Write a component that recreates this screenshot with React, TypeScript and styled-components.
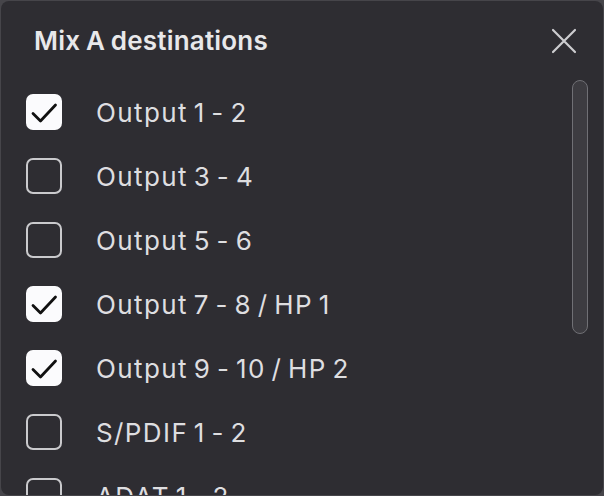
import React from "react";
import styled, { createGlobalStyle } from "styled-components";

const GlobalStyle = createGlobalStyle`
  html, body {
    margin: 0;
    padding: 0;
    background: #46454a;
  }
  body {
    font-family: Inter, "Noto Sans", sans-serif;
  }
`;

const Panel = styled.div`
  position: relative;
  box-sizing: border-box;
  margin: 1px 1px 0 1px;
  height: 494px;
  border-radius: 8px;
  background: #2e2d32;
  display: flex;
  flex-direction: column;
  overflow: hidden;
`;

const Header = styled.div`
  display: flex;
  align-items: center;
  justify-content: space-between;
  padding: 22px 26px 0 33px;
  height: 36px;
`;

const Title = styled.h1`
  margin: 0;
  font-size: 26px;
  line-height: 36px;
  font-weight: 600;
  color: #e8e8ea;
  letter-spacing: 0.2px;
  word-spacing: -1px;
`;

const CloseButton = styled.button`
  border: none;
  background: transparent;
  padding: 0;
  width: 26px;
  height: 26px;
  display: flex;
  align-items: center;
  justify-content: center;
  cursor: pointer;
`;

const List = styled.div`
  flex: 1;
  padding-top: 21px;
  overflow: hidden;
`;

const Row = styled.label`
  display: flex;
  align-items: center;
  height: 64px;
  padding-left: 25px;
  gap: 34px;
  cursor: pointer;
`;

const Box = styled.span<{ checked: boolean }>`
  box-sizing: border-box;
  width: 36px;
  height: 36px;
  border-radius: 7px;
  flex-shrink: 0;
  display: flex;
  align-items: center;
  justify-content: center;
  background: ${(p) => (p.checked ? "#fbfbfd" : "transparent")};
  border: ${(p) => (p.checked ? "none" : "2.5px solid #cacacd")};
`;

const Label = styled.span`
  font-size: 26px;
  color: #dedee0;
  letter-spacing: 1.4px;
  word-spacing: -3px;
`;

const Scrollbar = styled.div`
  position: absolute;
  top: 79px;
  right: 15px;
  width: 16px;
  height: 254px;
  box-sizing: border-box;
  border-radius: 8px;
  border: 1.5px solid #707075;
  background: #3d3c41;
`;

const items = [
  { name: "Output 1 - 2", checked: true },
  { name: "Output 3 - 4", checked: false },
  { name: "Output 5 - 6", checked: false },
  { name: "Output 7 - 8 / HP 1", checked: true },
  { name: "Output 9 - 10 / HP 2", checked: true },
  { name: "S/PDIF 1 - 2", checked: false },
  { name: "ADAT 1 - 2", checked: false },
];

const Check = () => (
  <svg width="36" height="36" viewBox="0 0 36 36" fill="none">
    <path
      d="M7 19.5l7.5 7.5L29.5 11"
      stroke="#111"
      strokeWidth="2.8"
      strokeLinecap="round"
      strokeLinejoin="round"
    />
  </svg>
);

export default function App() {
  return (
    <>
      <GlobalStyle />
      <Panel>
        <Header>
          <Title>Mix A destinations</Title>
          <CloseButton aria-label="Close">
            <svg width="26" height="26" viewBox="0 0 26 26" fill="none">
              <path
                d="M2 2l22 22M24 2L2 24"
                stroke="#cdcdd0"
                strokeWidth="2.2"
                strokeLinecap="round"
              />
            </svg>
          </CloseButton>
        </Header>
        <List>
          {items.map((it) => (
            <Row key={it.name}>
              <Box checked={it.checked}>{it.checked && <Check />}</Box>
              <Label>{it.name}</Label>
            </Row>
          ))}
        </List>
        <Scrollbar />
      </Panel>
    </>
  );
}
